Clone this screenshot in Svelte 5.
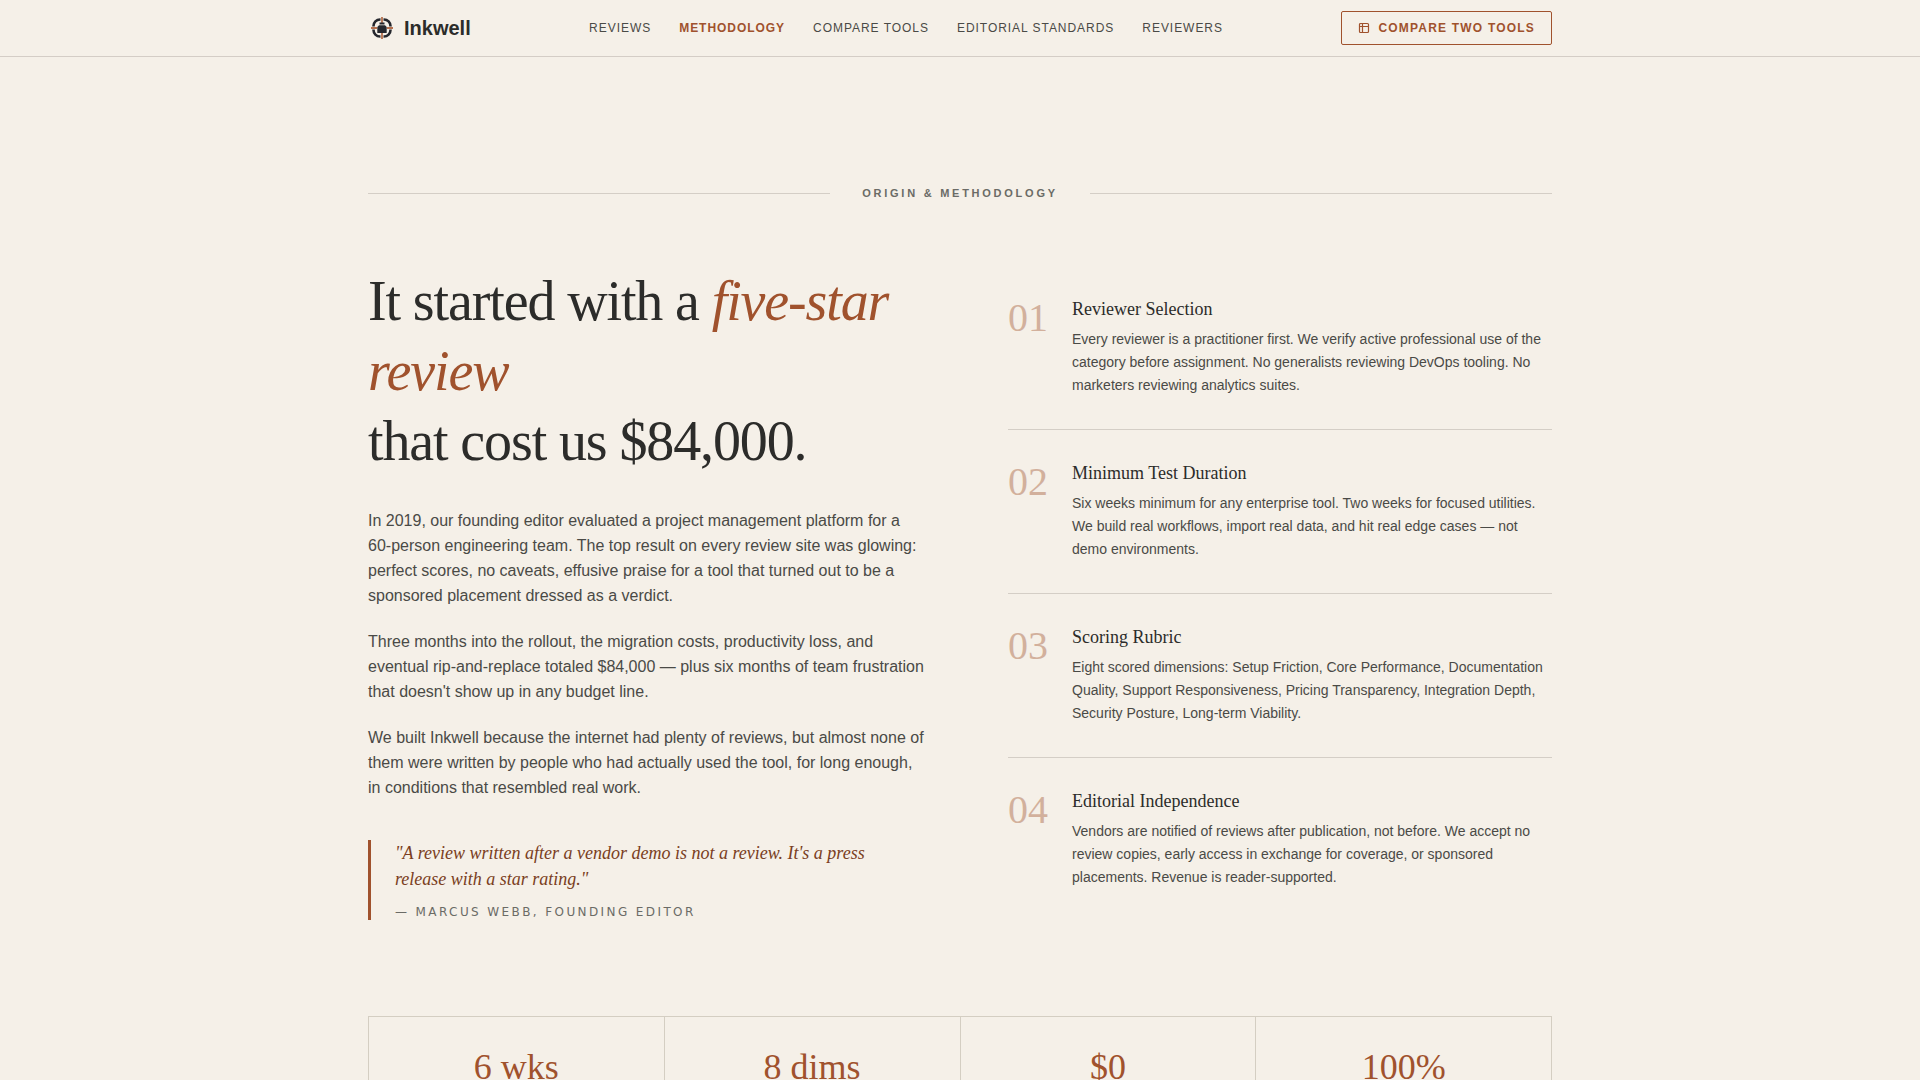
<script>
  const links = [
    { label: 'Reviews', href: '#reviews' },
    { label: 'Methodology', href: '#methodology', active: true },
    { label: 'Compare Tools', href: '#compare' },
    { label: 'Editorial Standards', href: '#standards' },
    { label: 'Reviewers', href: '#reviewers' }
  ];

  const steps = [
    {
      title: 'Reviewer Selection',
      text: 'Every reviewer is a practitioner first. We verify active professional use of the category before assignment. No generalists reviewing DevOps tooling. No marketers reviewing analytics suites.'
    },
    {
      title: 'Minimum Test Duration',
      text: 'Six weeks minimum for any enterprise tool. Two weeks for focused utilities. We build real workflows, import real data, and hit real edge cases — not demo environments.'
    },
    {
      title: 'Scoring Rubric',
      text: 'Eight scored dimensions: Setup Friction, Core Performance, Documentation Quality, Support Responsiveness, Pricing Transparency, Integration Depth, Security Posture, Long-term Viability.'
    },
    {
      title: 'Editorial Independence',
      text: 'Vendors are notified of reviews after publication, not before. We accept no review copies, early access in exchange for coverage, or sponsored placements. Revenue is reader-supported.'
    }
  ];

  const stats = ['6 wks', '8 dims', '$0', '100%'];
</script>

<header class="site-header">
  <div class="container bar">
    <a class="brand" href="#top">
      <svg class="logo" viewBox="0 0 28 28" aria-hidden="true">
        <rect x="5.5" y="5.5" width="17" height="17" rx="6.5" fill="none" stroke="#25272d" stroke-width="2.6" />
        <path d="M14 4v5M14 19v5M4 14h5M19 14h5" stroke="#f5f0e8" stroke-width="3" />
        <path d="M14 3v6M14 19v6M3 14h6M19 14h6" stroke="#b5704e" stroke-width="1.8" />
        <path d="M11.5 8.5h5v2h-5z" fill="#25272d" />
        <path d="M11 11.200h6l1.700 1.800V19H9.300v-6z" fill="#25272d" />
      </svg>
      Inkwell
    </a>

    <nav class="nav" aria-label="Main">
      {#each links as link}
        <a href={link.href} class:active={link.active}>{link.label}</a>
      {/each}
    </nav>

    <button class="compare" type="button">
      <svg viewBox="0 0 12 12" aria-hidden="true">
        <rect x="1.5" y="1.5" width="9" height="9" rx="1" />
        <path d="M1.5 4.5h9M4.500 1.500v9" />
      </svg>
      Compare Two Tools
    </button>
  </div>
</header>

<main class="container section" id="methodology">
  <div class="divider"><span>Origin &amp; Methodology</span></div>

  <div class="columns">
    <article>
      <h1>It started with a <em>five-star review</em><br />that cost us $84,000.</h1>

      <div class="story">
        <p>
          In 2019, our founding editor evaluated a project management platform for a
          <span class="nowrap">60-person</span> engineering team. The top result on every review
          site was glowing: perfect scores, no caveats, effusive praise for a tool that turned out
          to be a sponsored placement dressed as a verdict.
        </p>
        <p>
          Three months into the rollout, the migration costs, productivity loss, and eventual
          rip-and-replace totaled $84,000 — plus six months of team frustration that doesn't show
          up in any budget line.
        </p>
        <p>
          We built Inkwell because the internet had plenty of reviews, but almost none of them were
          written by people who had actually used the tool, for long enough, in conditions that
          resembled real work.
        </p>
      </div>

      <blockquote>
        <p>"A review written after a vendor demo is not a review. It's a press release with a star rating."</p>
        <cite>— Marcus Webb, Founding Editor</cite>
      </blockquote>
    </article>

    <ol class="steps">
      {#each steps as step, i}
        <li>
          <span class="number">0{i + 1}</span>
          <div>
            <h2>{step.title}</h2>
            <p>{step.text}</p>
          </div>
        </li>
      {/each}
    </ol>
  </div>

  <div class="stats">
    {#each stats as stat}
      <div class="stat">{stat}</div>
    {/each}
  </div>
</main>

<style>
  :global(body) {
    margin: 0;
    background: #f5f0e8;
    color: #2c2c2a;
    font-family: 'Liberation Sans', Arial, sans-serif;
  }

  .container {
    box-sizing: border-box;
    max-width: 1280px;
    margin: 0 auto;
    padding: 0 48px;
  }

  .site-header {
    border-bottom: 1px solid #d4cdc6;
  }

  .bar {
    display: flex;
    align-items: center;
    justify-content: space-between;
    min-height: 56px;
  }

  .brand {
    display: flex;
    align-items: center;
    gap: 8px;
    color: #2c2c2a;
    font-size: 20px;
    font-weight: 700;
    text-decoration: none;
  }

  .logo {
    width: 28px;
    height: 28px;
  }

  .nav {
    display: flex;
    gap: 28px;
  }

  .nav a {
    color: #4a4a46;
    font-size: 12px;
    letter-spacing: 0.08em;
    text-decoration: none;
    text-transform: uppercase;
  }

  .nav a.active {
    color: #a0522d;
    font-weight: 700;
  }

  .compare {
    display: flex;
    align-items: center;
    gap: 8px;
    height: 34px;
    padding: 0 16px;
    border: 1px solid #a0522d;
    border-radius: 2px;
    background: none;
    color: #a0522d;
    font-family: inherit;
    font-size: 12px;
    font-weight: 700;
    letter-spacing: 0.1em;
    text-transform: uppercase;
    cursor: pointer;
  }

  .compare svg {
    width: 12px;
    height: 12px;
    fill: none;
    stroke: currentColor;
    stroke-width: 1.2;
  }

  .section {
    padding-top: 128px;
    padding-bottom: 128px;
  }

  .divider {
    display: flex;
    align-items: center;
    gap: 32px;
    margin-bottom: 64px;
    color: #6b6b66;
    font-size: 11px;
    font-weight: 700;
    line-height: 17px;
    letter-spacing: 0.25em;
    text-transform: uppercase;
  }

  .divider::before,
  .divider::after {
    content: '';
    flex: 1;
    height: 1px;
    background: #d4cec6;
  }

  .columns {
    display: grid;
    grid-template-columns: 35fr 34fr;
    gap: 80px;
  }

  h1,
  h2,
  blockquote,
  .number,
  .stat {
    font-family: 'Liberation Serif', 'Times New Roman', serif;
    font-weight: 400;
  }

  h1 {
    margin: 0 0 32px;
    font-size: 56px;
    line-height: 70px;
    letter-spacing: -0.02em;
  }

  h1 em {
    color: #a0522d;
  }

  p {
    margin: 0;
  }

  .nowrap {
    white-space: nowrap;
  }

  .story {
    display: grid;
    gap: 21px;
    color: #4a4a46;
    font-size: 16px;
    line-height: 25px;
  }

  blockquote {
    margin: 40px 0 0;
    padding-left: 24px;
    border-left: 3px solid #a0522d;
    color: #7a3e22;
    font-size: 18px;
    font-style: italic;
    line-height: 26px;
  }

  /* keeps the quote narrower than the story text */
  blockquote p {
    max-width: 512px;
  }

  cite {
    display: block;
    margin-top: 12px;
    color: #6b6b66;
    font-family: 'DejaVu Sans', sans-serif;
    font-size: 12px;
    font-style: normal;
    line-height: 16px;
    letter-spacing: 0.2em;
    text-transform: uppercase;
  }

  .steps {
    margin: 0;
    padding: 0;
    list-style: none;
  }

  .steps li {
    display: flex;
    gap: 24px;
    padding: 32px 0;
    border-bottom: 1px solid #d4cec6;
  }

  .steps li:last-child {
    padding-bottom: 0;
    border-bottom: 0;
  }

  .number {
    flex: none;
    width: 40px;
    color: #a0522d;
    font-size: 40px;
    line-height: 40px;
    opacity: 0.4;
  }

  h2 {
    margin: 0 0 8px;
    font-size: 18px;
    line-height: 22px;
  }

  .steps p {
    color: #4a4a46;
    font-size: 14px;
    line-height: 23px;
  }

  .stats {
    display: grid;
    grid-template-columns: repeat(4, 1fr);
    gap: 1px;
    margin-top: 96px;
    border: 1px solid #d4cec2;
    background: #d4cec2;
  }

  .stat {
    padding: 32px 24px;
    background: #f5f0e8;
    color: #a0522d;
    font-size: 36px;
    line-height: 36px;
    text-align: center;
  }
</style>
